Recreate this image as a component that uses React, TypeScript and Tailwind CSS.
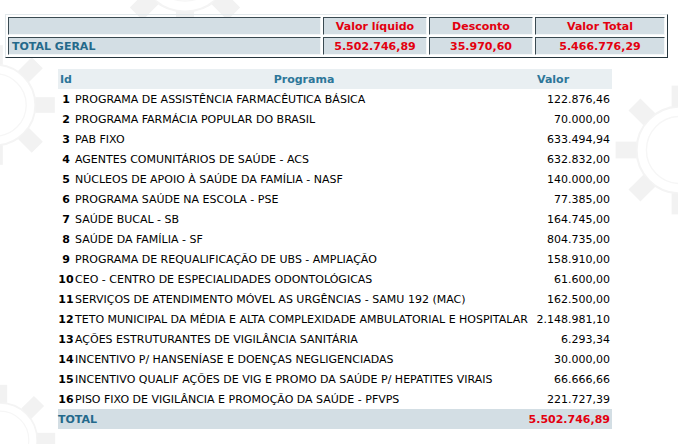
import React from "react";

interface Programa {
  id: number;
  nome: string;
  valor: string;
}

const programas: Programa[] = [
  { id: 1, nome: "PROGRAMA DE ASSISTÊNCIA FARMACÊUTICA BÁSICA", valor: "122.876,46" },
  { id: 2, nome: "PROGRAMA FARMÁCIA POPULAR DO BRASIL", valor: "70.000,00" },
  { id: 3, nome: "PAB FIXO", valor: "633.494,94" },
  { id: 4, nome: "AGENTES COMUNITÁRIOS DE SAÚDE - ACS", valor: "632.832,00" },
  { id: 5, nome: "NÚCLEOS DE APOIO À SAÚDE DA FAMÍLIA - NASF", valor: "140.000,00" },
  { id: 6, nome: "PROGRAMA SAÚDE NA ESCOLA - PSE", valor: "77.385,00" },
  { id: 7, nome: "SAÚDE BUCAL - SB", valor: "164.745,00" },
  { id: 8, nome: "SAÚDE DA FAMÍLIA - SF", valor: "804.735,00" },
  { id: 9, nome: "PROGRAMA DE REQUALIFICAÇÃO DE UBS - AMPLIAÇÃO", valor: "158.910,00" },
  { id: 10, nome: "CEO - CENTRO DE ESPECIALIDADES ODONTOLÓGICAS", valor: "61.600,00" },
  { id: 11, nome: "SERVIÇOS DE ATENDIMENTO MÓVEL AS URGÊNCIAS - SAMU 192 (MAC)", valor: "162.500,00" },
  { id: 12, nome: "TETO MUNICIPAL DA MÉDIA E ALTA COMPLEXIDADE AMBULATORIAL E HOSPITALAR", valor: "2.148.981,10" },
  { id: 13, nome: "AÇÕES ESTRUTURANTES DE VIGILÂNCIA SANITÁRIA", valor: "6.293,34" },
  { id: 14, nome: "INCENTIVO P/ HANSENÍASE E DOENÇAS NEGLIGENCIADAS", valor: "30.000,00" },
  { id: 15, nome: "INCENTIVO QUALIF AÇÕES DE VIG E PROMO DA SAÚDE P/ HEPATITES VIRAIS", valor: "66.666,66" },
  { id: 16, nome: "PISO FIXO DE VIGILÂNCIA E PROMOÇÃO DA SAÚDE - PFVPS", valor: "221.727,39" },
];

// faint gear watermark from the page background
function Gear({ className }: { className: string }) {
  return (
    <svg viewBox="0 0 200 200" className={className} fill="none">
      <circle cx="100" cy="100" r="62" stroke="#f4f4f4" strokeWidth="3" />
      <circle cx="100" cy="100" r="48" stroke="#f6f6f6" strokeWidth="2" />
      {[0, 45, 90, 135, 180, 225, 270, 315].map((a) => (
        <rect
          key={a}
          x="88"
          y="8"
          width="24"
          height="30"
          fill="#f2f2f2"
          transform={`rotate(${a} 100 100)`}
        />
      ))}
    </svg>
  );
}

export default function App() {
  const cell =
    "bg-[#d3dee4] border border-t-[#3a4a52] border-l-[#3a4a52] border-b-[#f4f7f8] border-r-[#f4f7f8] h-[18px] p-0 align-middle";

  return (
    <div
      className="relative w-[678px] h-[444px] overflow-hidden bg-white text-[11px] leading-none"
      style={{ fontFamily: "'DejaVu Sans', Verdana, sans-serif" }}
    >
      {/* watermark */}
      <Gear className="absolute -left-[70px] top-[40px] w-[130px] h-[130px]" />
      <Gear className="absolute left-[610px] top-[80px] w-[140px] h-[140px]" />
      <Gear className="absolute left-[110px] -top-[110px] w-[150px] h-[150px]" />
      <Gear className="absolute -left-[60px] top-[380px] w-[120px] h-[120px]" />

      <div className="relative pt-[14px] pl-[5px]">
        <table className="border-separate border-spacing-[2px] border border-t-[#e2e8eb] border-l-[#e2e8eb] border-b-[#26363e] border-r-[#26363e] w-[663px] font-bold">
          <tbody>
            <tr>
              <td className={`${cell} w-[313px]`}></td>
              <td className={`${cell} w-[104px] text-center text-[#e3000f]`}>Valor líquido</td>
              <td className={`${cell} w-[104px] text-center text-[#e3000f]`}>Desconto</td>
              <td className={`${cell} text-center text-[#e3000f]`}>Valor Total</td>
            </tr>
            <tr>
              <td className={`${cell} pl-[3px] text-[#24698b]`}>TOTAL GERAL</td>
              <td className={`${cell} text-center text-[#e3000f]`}>5.502.746,89</td>
              <td className={`${cell} text-center text-[#e3000f]`}>35.970,60</td>
              <td className={`${cell} text-center text-[#e3000f]`}>5.466.776,29</td>
            </tr>
          </tbody>
        </table>
      </div>

      <div className="relative ml-[58px] mt-[11px] w-[554px]">
        <div className="grid grid-cols-[16px_1fr_78px] h-[20px] items-center bg-[#e9eff2] font-bold text-[#2d7699]">
          <span className="text-center">Id</span>
          <span className="text-center">Programa</span>
          <span className="pl-[3px]">Valor</span>
        </div>
        {programas.map((p) => (
          <div key={p.id} className="grid grid-cols-[16px_1fr_78px] h-[20px] items-center text-black">
            <span className="text-center font-bold">{p.id}</span>
            <span className="pl-px whitespace-nowrap">{p.nome}</span>
            <span className="text-right pr-[2px]">{p.valor}</span>
          </div>
        ))}
        <div className="flex justify-between h-[20px] items-center bg-[#d3dee4] font-bold">
          <span className="text-[#24698b]">TOTAL</span>
          <span className="pr-[2px] text-[#e3000f]">5.502.746,89</span>
        </div>
      </div>
    </div>
  );
}
